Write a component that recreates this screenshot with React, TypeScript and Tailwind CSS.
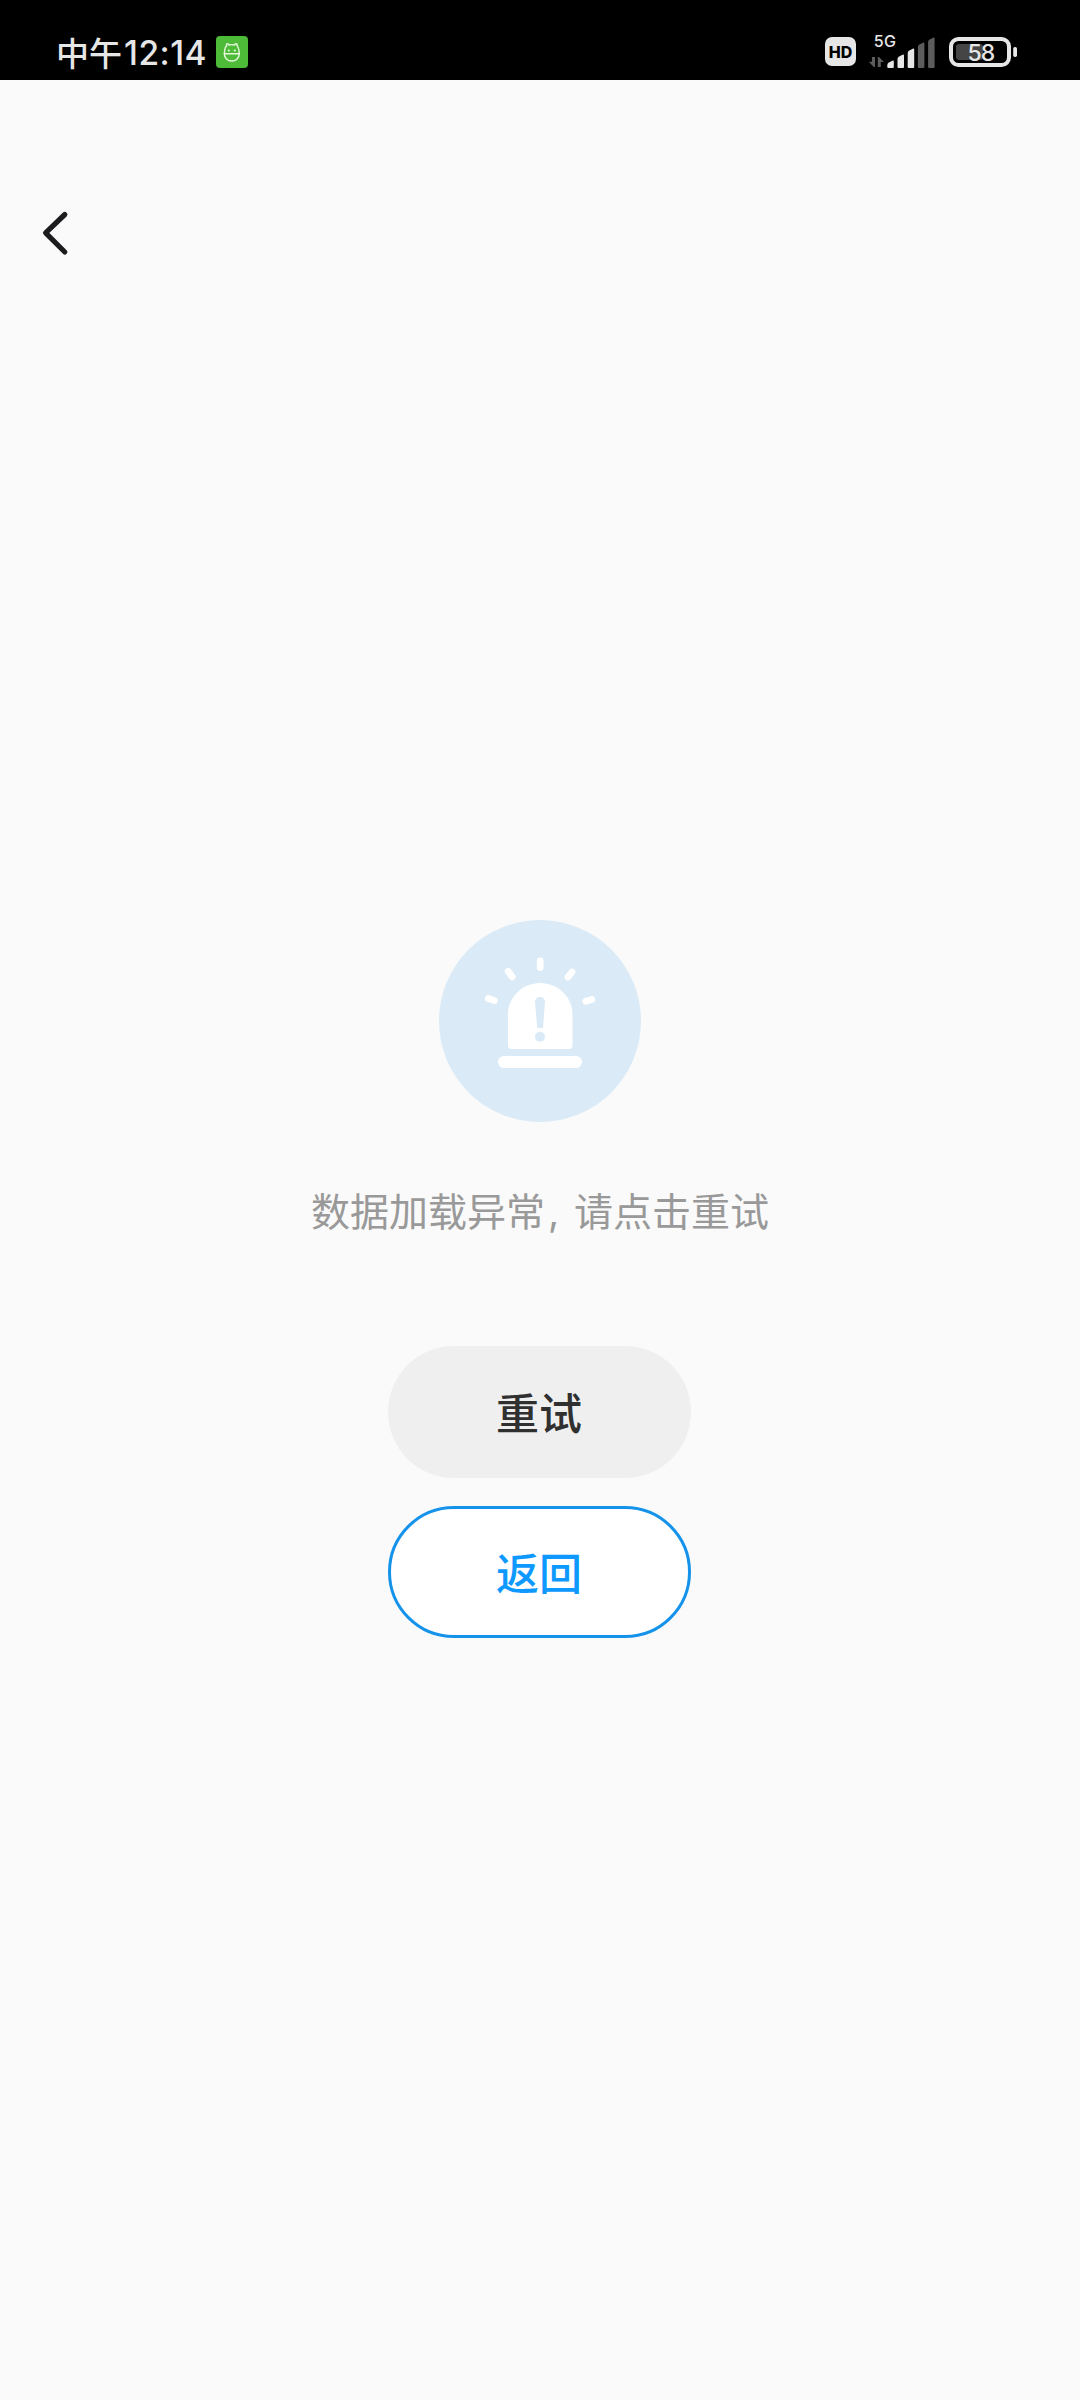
const FONT = "font-['Inter','Noto_Sans_CJK_SC',sans-serif]";

// Height of each signal bar, strongest last; only the first three are lit
const SIGNAL = [
    { h: 8, on: true },
    { h: 14, on: true },
    { h: 20, on: true },
    { h: 26, on: false },
    { h: 31, on: false },
];

function AppBadge() {
    return (
        <svg width="32" height="32" viewBox="0 0 32 32" fill="none" className="ml-[10px]">
            <rect width="32" height="32" rx="4" fill="#4dbb38" />
            <g stroke="#e6f7de" strokeWidth="1.4" strokeLinejoin="round" strokeLinecap="round">
                <path d="M9 12.5C9.5 10.8 10 10.3 10.6 9.6C10.2 8.4 10.8 7.6 11.6 7.7C12.5 7.7 12.8 8.3 13 9C14.8 8.5 16.8 8.5 18.6 9C18.8 8.2 19.3 7.7 20.1 7.7C21 7.7 21.5 8.5 21 9.6C22 10.8 22.6 12 22.8 13.5L23.3 17.5C23.3 22 20 25 15.8 25C11.6 25 8.3 22 8.3 17.5Z" />
                <path d="M8.3 17.8H23.3" />
            </g>
            <circle cx="12.8" cy="14.5" r="1.1" fill="#e6f7de" />
            <circle cx="18.8" cy="14.5" r="1.1" fill="#e6f7de" />
        </svg>
    );
}

function Signal() {
    return (
        <svg width="68" height="46" viewBox="0 -10 68 46" className="ml-[12px]">
            <text x="5.8" y="14.3" fontSize="16" fontWeight="500" letterSpacing="0.4" fill="#e6e6e6">
                5G
            </text>
            <path d="M4 24H7V34H5.8L.8 28.8H4ZM9.8 34V24H11L16 29H12.8V34Z" fill="#5c5c5c" />
            {SIGNAL.map((bar, i) => {
                const x = 19.3 + i * 10.2;
                const top = 35.5 - bar.h;
                return (
                    <path
                        key={i}
                        d={`M${x} ${top + 4.5}Q${x} ${top + 3} ${x + 1.2} ${top + 2.3}L${x + 5} ${top + 0.2}Q${x + 6.5} ${top - 0.4} ${x + 6.5} ${top + 1}V34Q${x + 6.5} 35 ${x + 5.5} 35H${x + 1}Q${x} 35 ${x} 34Z`}
                        fill={bar.on ? "#e6e6e6" : "#5c5c5c"}
                    />
                );
            })}
        </svg>
    );
}

function Battery() {
    return (
        <svg width="69" height="30" viewBox="0 0 69 30" className="ml-[13px]">
            <rect x="2" y="2" width="58" height="26" rx="7.5" fill="none" stroke="#e6e6e6" strokeWidth="4" />
            <rect x="7" y="7" width="27" height="16" rx="3" fill="#454545" />
            <text x="31.8" y="23.9" textAnchor="middle" fontSize="23" fontWeight="500" letterSpacing="-1.1" fill="#e6e6e6">
                58
            </text>
            <rect x="64.2" y="10" width="3.8" height="10" rx="1.7" fill="#e6e6e6" />
        </svg>
    );
}

function StatusBar() {
    return (
        <header className="flex h-20 items-start justify-between bg-black pl-[56px] pr-[62px]">
            <div className="flex pt-[36px] text-[#e6e6e6]">
                <span className="w-[68px] whitespace-nowrap pt-[2px] text-[33px] leading-[32px] font-medium">中午</span>
                <span className="w-[82px] whitespace-nowrap pt-px text-[33.5px] leading-[33px] font-medium tracking-[0.5px]">12:14</span>
                <AppBadge />
            </div>
            <div className="flex items-start pt-[37px]">
                <span className="flex h-[29px] w-[31px] items-center justify-center rounded-[7px] bg-[#e6e6e6] text-[16px] font-extrabold text-black">
                    HD
                </span>
                <div className="-mt-[14px] flex">
                    <Signal />
                </div>
                <Battery />
            </div>
        </header>
    );
}

function AlarmIcon() {
    return (
        <svg width="202" height="202" viewBox="0 0 202 202" fill="none">
            <circle cx="101" cy="101" r="101" fill="#daebf7" />
            <g stroke="#fff" strokeWidth="6.8" strokeLinecap="round">
                <path d="M101.2 41V47.5" />
                <path d="M69.2 51.3L73.2 56.8" />
                <path d="M133 52L129 57" />
                <path d="M49.3 78.6L55.3 80.4" />
                <path d="M152.8 79.4L146.8 81.2" />
            </g>
            <path d="M69 94.5C69 77 83.5 63 101.2 63C119 63 133.5 77 133.5 94.5V125.5Q133.5 129 130 129H72.5Q69 129 69 125.5Z" fill="#fff" />
            <rect x="59" y="136" width="84" height="12" rx="6" fill="#fff" />
            <path d="M96 82C96 79 98 77 101 77C104 77 106 79 106 82L104 108H98.2Z" fill="#daebf7" />
            <circle cx="101" cy="116.8" r="5" fill="#daebf7" />
        </svg>
    );
}

export default function App() {
    return (
        <div className={`flex h-[2400px] w-[1080px] flex-col bg-[#fafafa] ${FONT}`}>
            <StatusBar />

            <nav className="flex h-[160px] pt-[130px] pl-[40px]">
                <button aria-label="返回" className="block h-[46px] w-[32px]">
                    <svg width="32" height="46" viewBox="0 0 32 46" fill="none">
                        <path d="M24.8 4.5L5.6 22.8L24.8 42" stroke="#1c1c1e" strokeWidth="5.2" strokeLinecap="round" strokeLinejoin="round" />
                    </svg>
                </button>
            </nav>

            <main className="flex flex-col items-center pt-[680px]">
                <AlarmIcon />
                <p className="mt-[61px] flex h-[58px] items-center whitespace-nowrap text-[39px] text-[#999999]">
                    <span>数据加载异常</span>
                    <span className="w-[29px] pl-[3px]">,</span>
                    <span>请点击重试</span>
                </p>
                <button className="mt-[105px] mr-px h-[132px] w-[303px] rounded-[66px] bg-[#efefef] pt-[5px] pr-px text-[43px] font-medium text-[#303030]">
                    重试
                </button>
                <button className="mt-[28px] mr-px h-[132px] w-[303px] rounded-[66px] border-[3px] border-[#1593ea] bg-white pt-[4px] pr-px text-[43px] font-medium text-[#0d99ff]">
                    返回
                </button>
            </main>
        </div>
    );
}
